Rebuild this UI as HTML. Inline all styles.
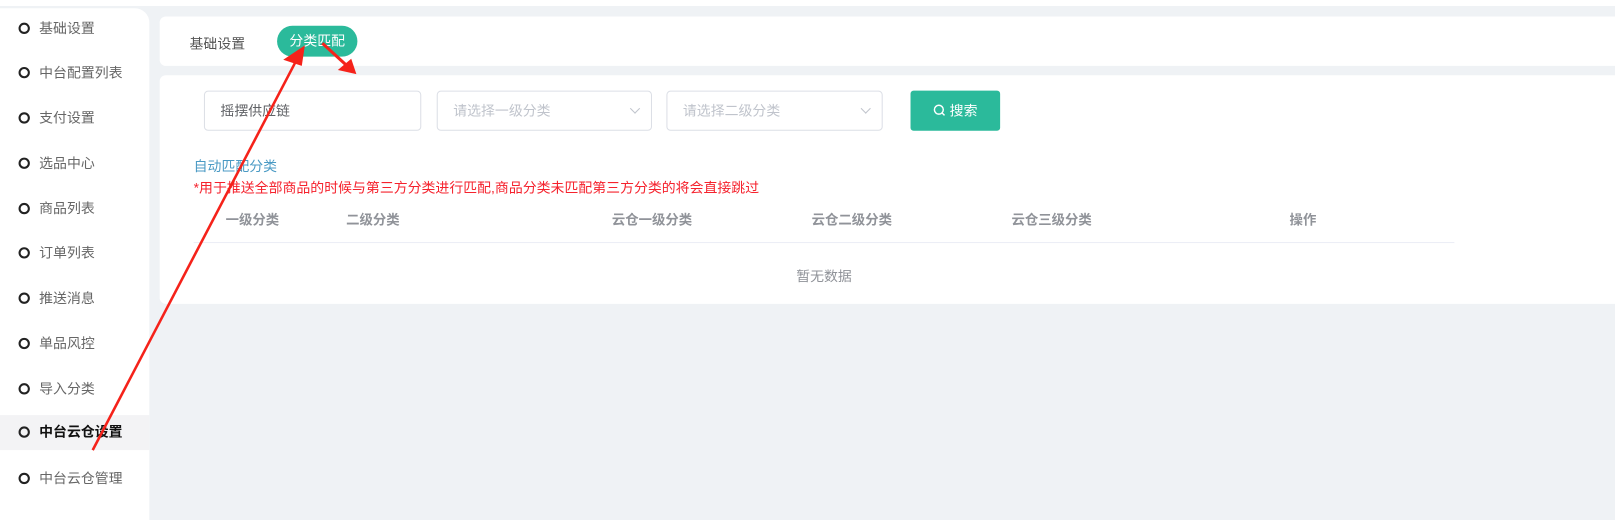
<!DOCTYPE html>
<html><head><meta charset="utf-8"><style>
*{margin:0;padding:0;box-sizing:border-box}
body{width:1615px;height:505px;background:#eff2f5;font-family:"Liberation Sans","Noto Sans CJK SC",sans-serif;position:relative;overflow:hidden;font-size:13.5px}
#w{position:absolute;left:0;top:0;width:1568px;height:491px;transform:scale(1.03);transform-origin:0 0}
.top{position:absolute;left:0;top:0;width:1615px;height:6px;background:#fff}
.side{position:absolute;left:0;top:8px;width:145px;height:497px;background:#fff;border-top-right-radius:14px}
.it{position:absolute;left:0;width:145px;height:35px;line-height:35px;color:#666;font-size:13.5px}
.it i{position:absolute;left:18px;top:12px;width:11px;height:11px;border:2px solid #222;border-radius:50%}
.it span{position:absolute;left:38px}
.it.a{background:#f3f3f5;color:#111;font-weight:bold}
.card{position:absolute;background:#fff;border-radius:6px}
.t{position:absolute;white-space:nowrap}
.inp{position:absolute;top:88px;height:39px;border:1px solid #dcdfe6;border-radius:4px;line-height:37px;padding-left:15px;color:#c0c4cc}
.inp b{position:absolute;right:12px;top:13px;width:7px;height:7px;border-right:1px solid #c0c4cc;border-bottom:1px solid #c0c4cc;transform:rotate(45deg)}
.th{position:absolute;top:203px;font-weight:bold;color:#909399;font-size:13px}
</style></head><body>
<div class="top"></div>
<div id="w">
<div class="side">
<div class="it" style="top:2px"><i></i><span>基础设置</span></div>
<div class="it" style="top:45px"><i></i><span>中台配置列表</span></div>
<div class="it" style="top:89px"><i></i><span>支付设置</span></div>
<div class="it" style="top:133px"><i></i><span>选品中心</span></div>
<div class="it" style="top:177px"><i></i><span>商品列表</span></div>
<div class="it" style="top:220px"><i></i><span>订单列表</span></div>
<div class="it" style="top:264px"><i></i><span>推送消息</span></div>
<div class="it" style="top:308px"><i></i><span>单品风控</span></div>
<div class="it" style="top:352px"><i></i><span>导入分类</span></div>
<div class="it a" style="top:395px;height:34px;line-height:34px"><i style="top:11px"></i><span>中台云仓设置</span></div>
<div class="it" style="top:439px"><i></i><span>中台云仓管理</span></div>
</div>
<div class="card" style="left:155px;top:16px;width:1470px;height:48px"></div>
<div class="t" style="left:184px;top:31px;color:#555">基础设置</div>
<div style="position:absolute;left:269px;top:25px;width:78px;height:30px;border-radius:15px;background:#2bba9b;color:#fff;text-align:center;line-height:30px">分类匹配</div>
<div class="card" style="left:155px;top:73px;width:1470px;height:222px"></div>
<div class="inp" style="left:198px;width:211px;color:#606266">摇摆供应链</div>
<div class="inp" style="left:424px;width:209px">请选择一级分类<b></b></div>
<div class="inp" style="left:647px;width:210px">请选择二级分类<b></b></div>
<div style="position:absolute;left:884px;top:88px;width:87px;height:39px;background:#2bba9b;border-radius:3px;color:#fff;line-height:39px;text-align:center"><svg width="12" height="12" viewBox="0 0 12 12" style="vertical-align:-1px;margin-right:4px"><circle cx="5.5" cy="5.5" r="4.3" fill="none" stroke="#fff" stroke-width="1.4"/><path d="M8.6 8.6L11 11" stroke="#fff" stroke-width="1.4"/></svg>搜索</div>
<div class="t" style="left:188px;top:150px;color:#4a9ac4">自动匹配分类</div>
<div class="t" style="left:188px;top:171px;color:#f5222d">*用于推送全部商品的时候与第三方分类进行匹配,商品分类未匹配第三方分类的将会直接跳过</div>
<div class="th" style="left:219px">一级分类</div>
<div class="th" style="left:336px">二级分类</div>
<div class="th" style="left:594px">云仓一级分类</div>
<div class="th" style="left:788px">云仓二级分类</div>
<div class="th" style="left:982px">云仓三级分类</div>
<div class="th" style="left:1252px">操作</div>
<div style="position:absolute;left:188px;top:235px;width:1224px;height:1px;background:#ebeef5"></div>
<div class="t" style="left:773px;top:257px;color:#909399">暂无数据</div>
<svg width="1615" height="505" style="position:absolute;left:0;top:0">
<path d="M90 437L287 60" stroke="#f5221a" stroke-width="2.5" fill="none"/>
<path d="M296 44L275 58L293 64Z" fill="#f5221a"/>
<path d="M313 42L337 64" stroke="#f5221a" stroke-width="3" fill="none"/>
<path d="M346 72L328 68L341 57Z" fill="#f5221a"/>
</svg>
</div>
</body></html>
